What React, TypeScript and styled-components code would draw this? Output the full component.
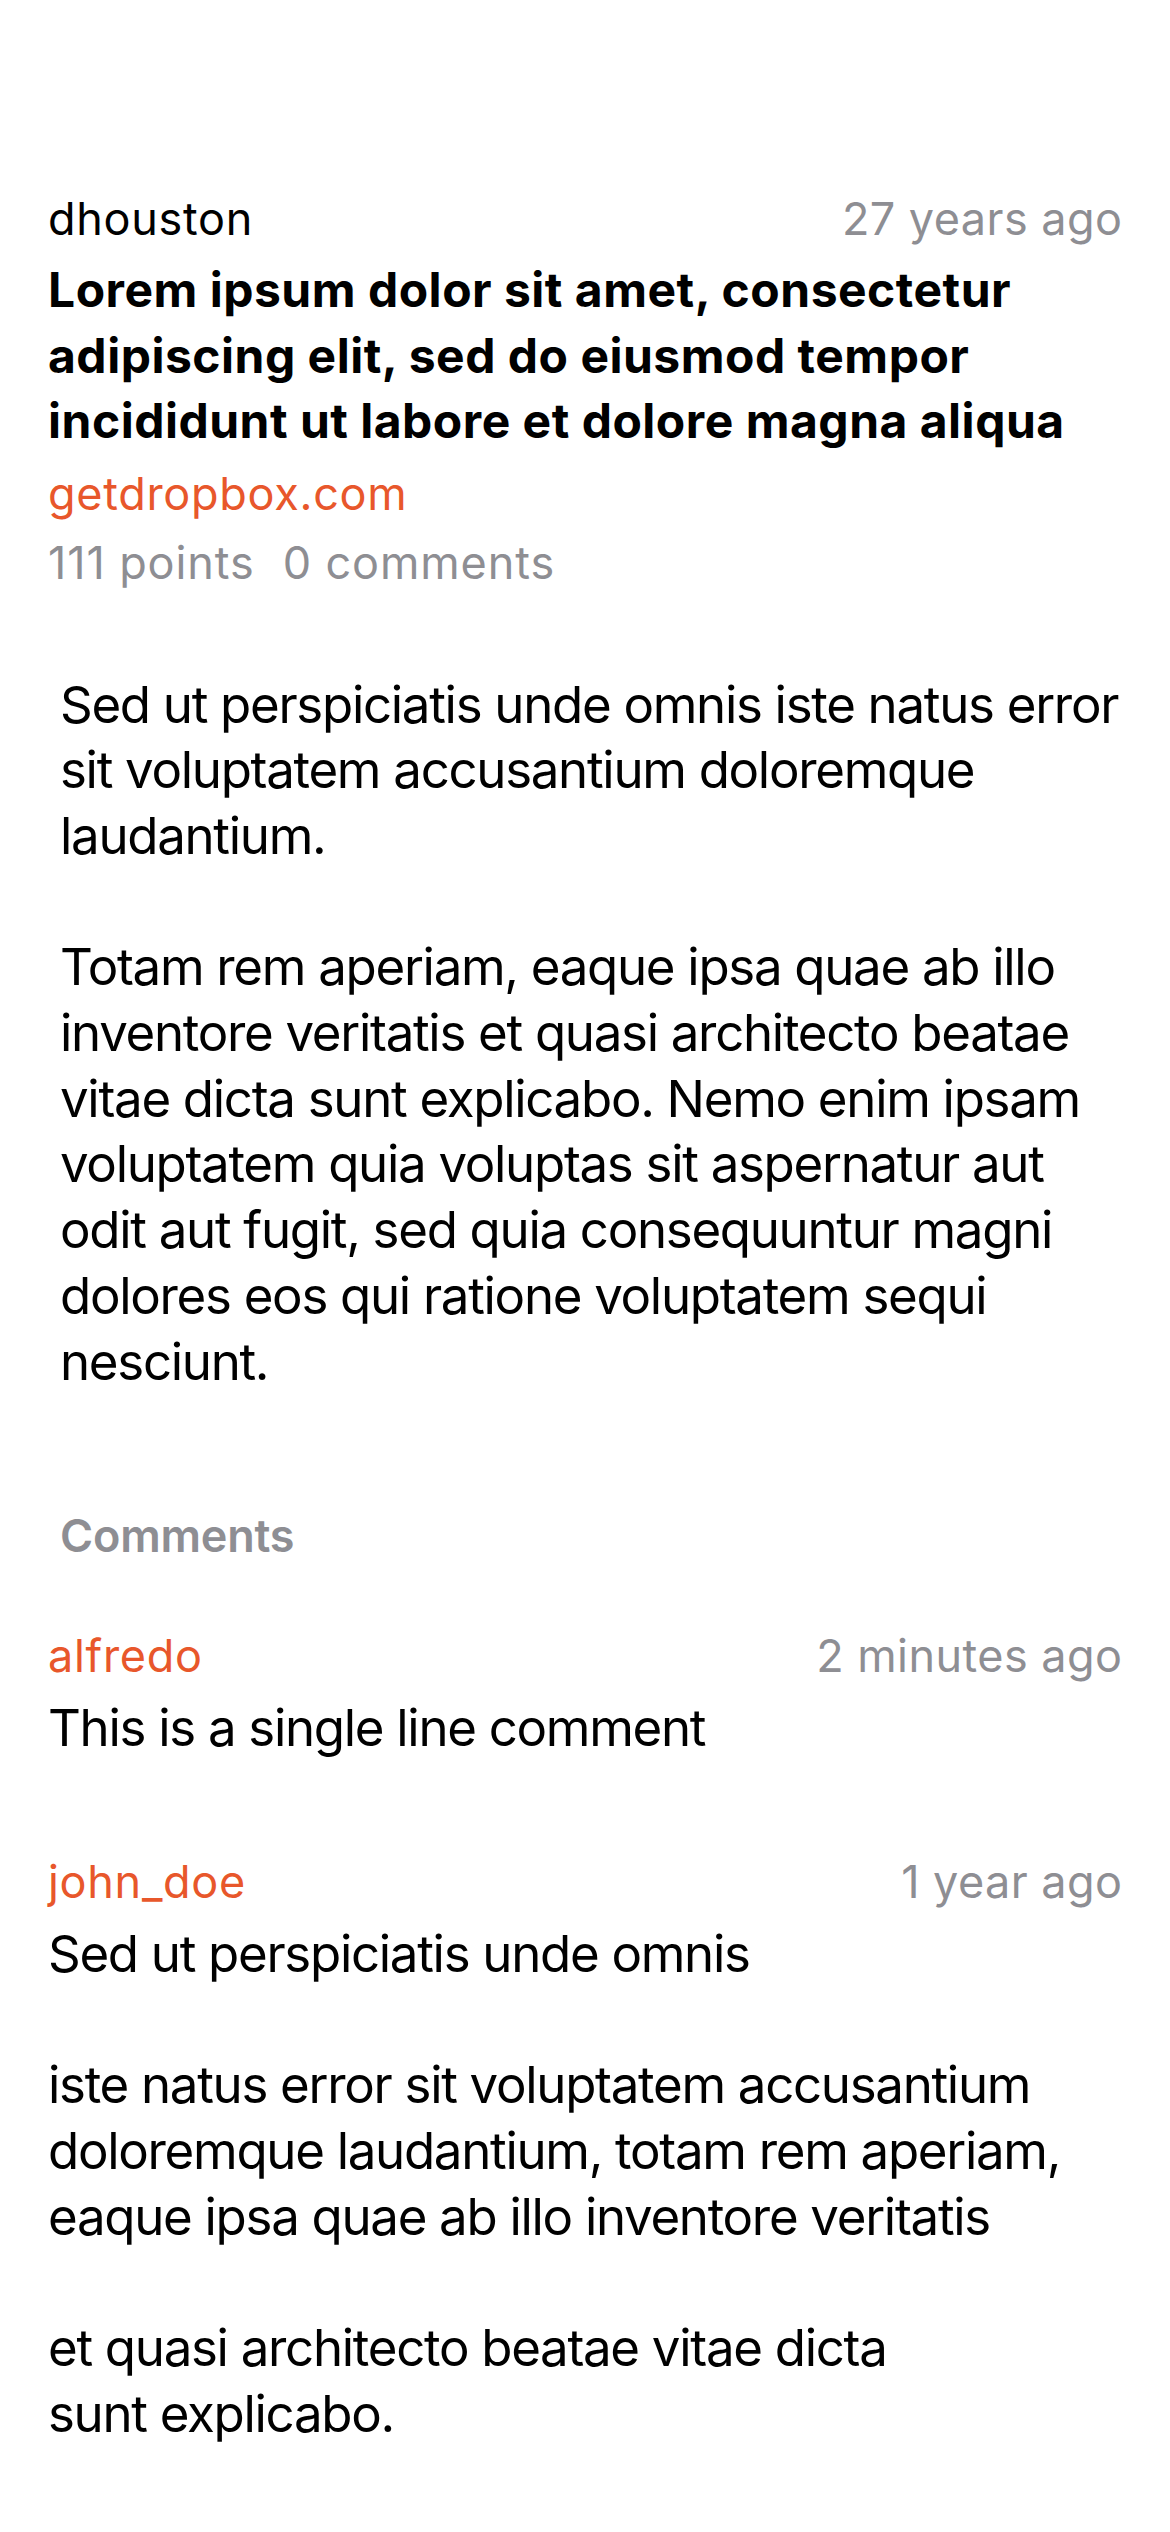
import React from "react";
import styled, { createGlobalStyle } from "styled-components";

const GlobalStyle = createGlobalStyle`
  html, body {
    margin: 0;
    padding: 0;
    background: #ffffff;
  }
  body {
    font-family: Inter, "Noto Sans", "Liberation Sans", sans-serif;
    color: #000000;
    -webkit-font-smoothing: antialiased;
  }
`;

const ACCENT = "#E8572B";
const MUTED = "#8E8E93";

const Page = styled.main`
  width: 1170px;
  min-height: 2532px;
  box-sizing: border-box;
  padding: 192px 48px 0;
  display: flex;
  flex-direction: column;
`;

const Story = styled.article`
  display: flex;
  flex-direction: column;
`;

const MetaRow = styled.div`
  display: flex;
  justify-content: space-between;
  align-items: baseline;
  font-size: 45px;
  line-height: 54px;
`;

const UserName = styled.span<{ $accent?: boolean }>`
  letter-spacing: 0.7px;
  color: ${(p) => (p.$accent ? ACCENT : "#000000")};
`;

const Age = styled.span`
  letter-spacing: 0.45px;
  margin-right: -0.45px;
  color: ${MUTED};
`;

const Title = styled.h1`
  margin: 11px 0 0;
  font-size: 48px;
  font-weight: 700;
  line-height: 65.5px;
  letter-spacing: 0.5px;
`;

const Domain = styled.a`
  margin-top: 13px;
  font-size: 45px;
  line-height: 54px;
  letter-spacing: 0.7px;
  color: ${ACCENT};
  text-decoration: none;
`;

const Stats = styled.div`
  margin-top: 15px;
  display: flex;
  gap: 28px;
  font-size: 45px;
  line-height: 54px;
  letter-spacing: 0.9px;
  color: ${MUTED};
`;

const BodyText = styled.div`
  font-size: 51px;
  line-height: 65.7px;
  letter-spacing: -1.3px;
  white-space: pre-line;
`;

const StoryText = styled(BodyText)`
  margin-top: 82px;
  padding-left: 12px;
`;

const SectionHeader = styled.h2`
  margin: 115px 0 0;
  padding-left: 12px;
  font-size: 45px;
  font-weight: 600;
  line-height: 54px;
  letter-spacing: -0.2px;
  color: ${MUTED};
`;

const CommentList = styled.section`
  margin-top: 66px;
  display: flex;
  flex-direction: column;
  gap: 94px;
`;

const CommentItem = styled.div`
  display: flex;
  flex-direction: column;
  gap: 12px;
`;

const storyText = `Sed ut perspiciatis unde omnis iste natus error sit voluptatem accusantium doloremque laudantium.

Totam rem aperiam, eaque ipsa quae ab illo inventore veritatis et quasi architecto beatae vitae dicta sunt explicabo. Nemo enim ipsam voluptatem quia voluptas sit aspernatur aut odit aut fugit, sed quia consequuntur magni dolores eos qui ratione voluptatem sequi nesciunt.`;

const comments = [
  {
    user: "alfredo",
    age: "2 minutes ago",
    text: "This is a single line comment",
  },
  {
    user: "john_doe",
    age: "1 year ago",
    text: `Sed ut perspiciatis unde omnis

iste natus error sit voluptatem accusantium doloremque laudantium, totam rem aperiam, eaque ipsa quae ab illo inventore veritatis

et quasi architecto beatae vitae dicta
sunt explicabo.`,
  },
];

export default function App() {
  return (
    <>
      <GlobalStyle />
      <Page>
        <Story>
          <MetaRow>
            <UserName>dhouston</UserName>
            <Age>27 years ago</Age>
          </MetaRow>
          <Title>
            Lorem ipsum dolor sit amet, consectetur adipiscing elit, sed do eiusmod tempor incididunt ut labore et dolore magna aliqua
          </Title>
          <Domain href="#">getdropbox.com</Domain>
          <Stats>
            <span>111 points</span>
            <span>0 comments</span>
          </Stats>
          <StoryText>{storyText}</StoryText>
        </Story>
        <SectionHeader>Comments</SectionHeader>
        <CommentList>
          {comments.map((c) => (
            <CommentItem key={c.user}>
              <MetaRow>
                <UserName $accent>{c.user}</UserName>
                <Age>{c.age}</Age>
              </MetaRow>
              <BodyText>{c.text}</BodyText>
            </CommentItem>
          ))}
        </CommentList>
      </Page>
    </>
  );
}
